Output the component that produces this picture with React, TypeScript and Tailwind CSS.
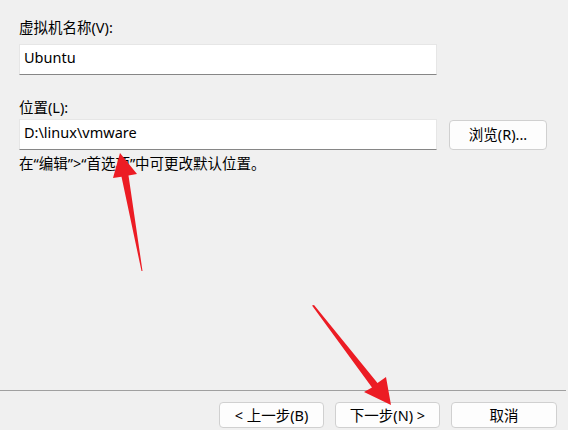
import React from "react";

const font = { fontFamily: '"Noto Sans", "Noto Sans CJK SC", sans-serif' };

function Btn({ children, w }: { children: React.ReactNode; w: string }) {
  return (
    <button
      className={`h-[26px] ${w} rounded-[4px] border border-[#d0d0d0] bg-[#fdfdfd] text-[14.5px] text-black leading-none flex items-center justify-center`}
    >
      {children}
    </button>
  );
}

export default function App() {
  return (
    <div
      className="relative w-[568px] h-[430px] bg-[#f0f0f0] text-black flex flex-col overflow-hidden"
      style={font}
    >
      <div className="flex-1 pl-[19px] pt-[17px]">
        <div className="text-[14.5px] leading-[20px]">虚拟机名称(V):</div>
        <div className="mt-[7px] w-[418px] h-[31px] bg-white border border-[#e6e6e6] border-b-[#868686] flex items-center pl-[4px] pb-[3px] text-[14.5px]">
          Ubuntu
        </div>
        <div className="mt-[22px] text-[14.5px] leading-[20px]">位置(L):</div>
        <div className="mt-[2px] flex items-start gap-[12px]">
          <div className="w-[418px] h-[31px] bg-white border border-[#e6e6e6] border-b-[#868686] flex items-center pl-[4px] pb-[3px] text-[14.5px]">
            D:\linux\vmware
          </div>
          <button className="mt-[1px] w-[98px] h-[30px] rounded-[4px] border border-[#d0d0d0] bg-[#fdfdfd] text-[14.5px] flex items-center justify-center">
            浏览(R)...
          </button>
        </div>
        <div className="mt-[3px] text-[14.5px] leading-[20px]">
          在“编辑”&gt;“首选项”中可更改默认位置。
        </div>
      </div>
      <div className="h-px bg-[#a0a0a0] mr-[2px]" />
      <div className="h-[39px] flex items-start justify-end gap-[11px] pt-[11px] pr-[11px]">
        <Btn w="w-[105px]">&lt; 上一步(B)</Btn>
        <Btn w="w-[105px]">下一步(N) &gt;</Btn>
        <Btn w="w-[106px]">取消</Btn>
      </div>
      <svg
        className="absolute inset-0 pointer-events-none"
        width="568"
        height="430"
        viewBox="0 0 568 430"
      >
        <polygon
          fill="#ec1c24"
          points="142.5,271 128.5,175.5 137,174 120,153 113,178 121.5,176.7 141.5,271"
        />
        <polygon
          fill="#ec1c24"
          points="312,305.5 372,387.5 364,392 391,405 386,377 377.5,383 314,305"
        />
      </svg>
    </div>
  );
}
